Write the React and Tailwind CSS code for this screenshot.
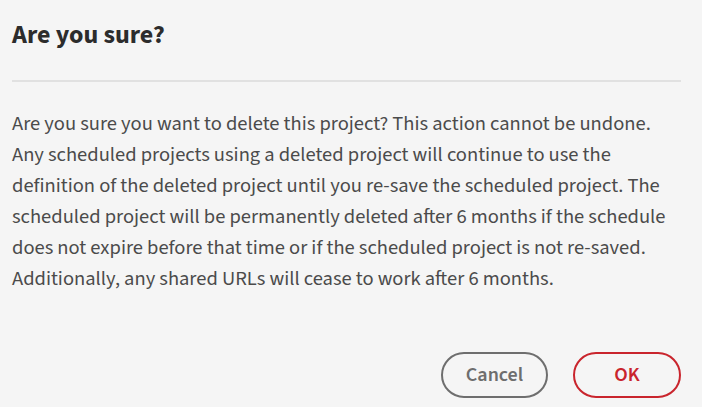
export default function App() {
  return (
    <div className="w-[702px] h-[407px] bg-[#f5f5f5] overflow-hidden pl-[12px] pr-[21px] font-['Source_Sans_3','Noto_Sans',sans-serif]">
      <h2 className="pt-[19px] text-[26px] leading-[32px] font-bold text-[#2c2c2c]">
        Are you sure?
      </h2>
      <div className="mt-[29px] h-[2px] bg-[#e1e1e1]" />
      <p className="mt-[26px] text-[20.5px] leading-[31px] text-[#4b4b4b] whitespace-nowrap">
        Are you sure you want to delete this project? This action cannot be undone.
        <br />
        Any scheduled projects using a deleted project will continue to use the
        <br />
        definition of the deleted project until you re-save the scheduled project. The
        <br />
        scheduled project will be permanently deleted after 6 months if the schedule
        <br />
        does not expire before that time or if the scheduled project is not re-saved.
        <br />
        Additionally, any shared URLs will cease to work after 6 months.
      </p>
      <div className="mt-[58px] flex justify-end gap-[25px]">
        <button className="w-[107px] h-[46px] rounded-full border-2 border-[#6e6e6e] text-[#6e6e6e] text-[20px] font-semibold">
          Cancel
        </button>
        <button className="w-[108px] h-[46px] rounded-full border-2 border-[#c9252d] text-[#c9252d] text-[20px] font-semibold">
          OK
        </button>
      </div>
    </div>
  );
}
